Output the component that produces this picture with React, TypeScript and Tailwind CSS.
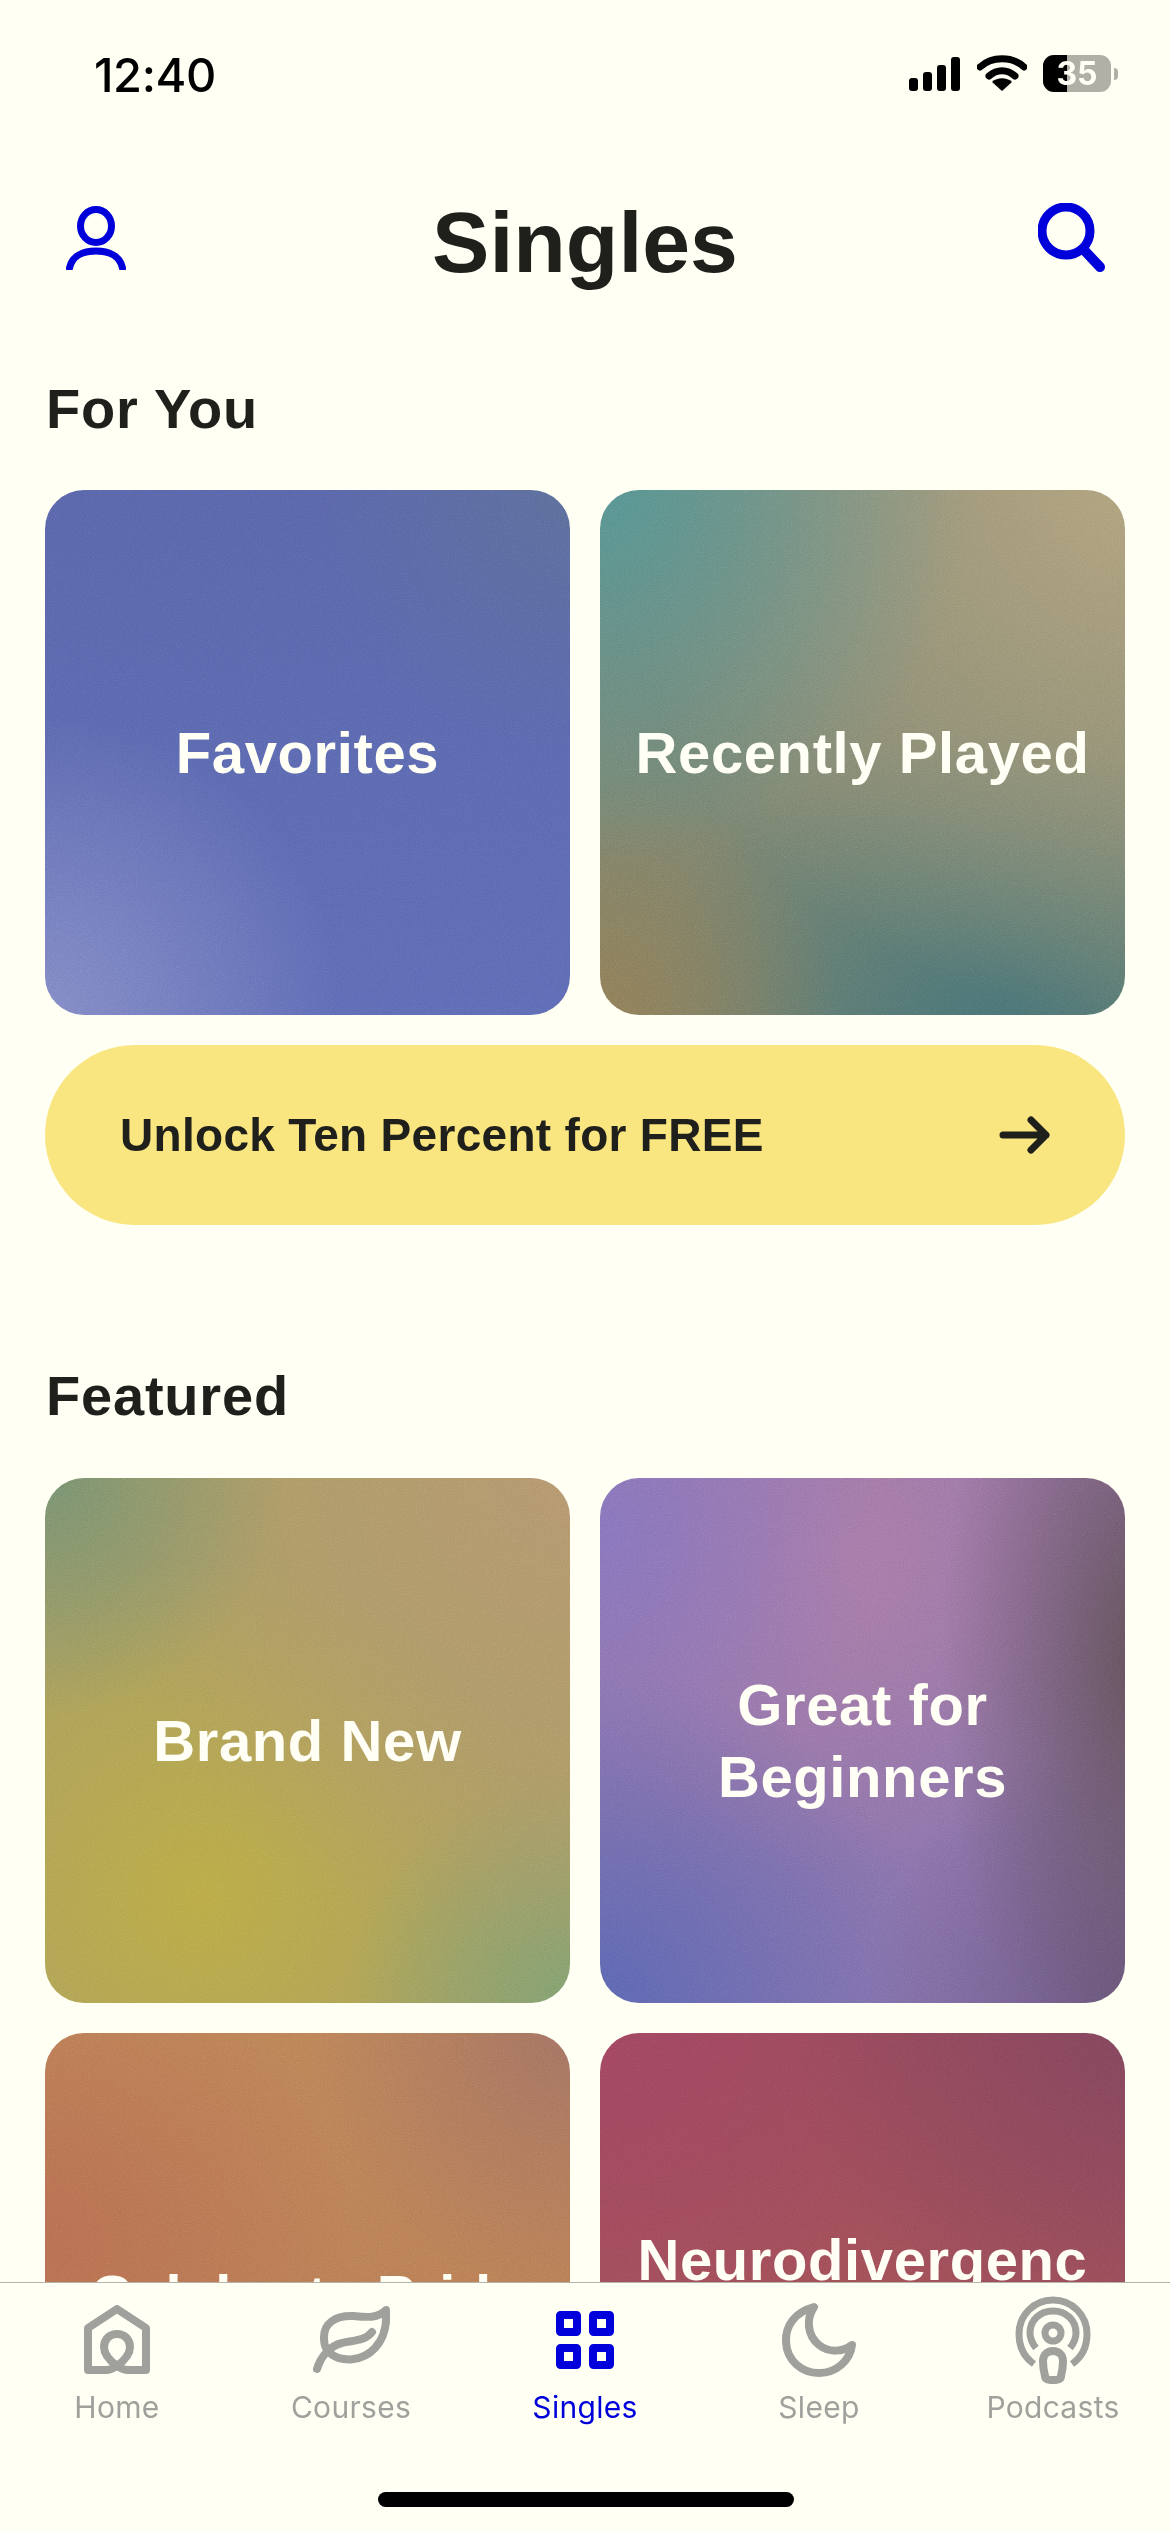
import type { ReactNode } from 'react';

const headingFont = "font-['Liberation_Sans',Arial,sans-serif]";

function Grain() {
  return (
    <svg className="absolute inset-0 h-full w-full opacity-[0.28] mix-blend-overlay" aria-hidden="true">
      <filter id="card-grain">
        <feTurbulence type="fractalNoise" baseFrequency="0.85" numOctaves="2" stitchTiles="stitch" />
        <feColorMatrix type="saturate" values="0" />
      </filter>
      <rect width="100%" height="100%" filter="url(#card-grain)" />
    </svg>
  );
}

function Card({ title, bg }: { title: string; bg: string }) {
  return (
    <div className={`relative flex h-[525px] items-center justify-center overflow-hidden rounded-[39px] px-[24px] ${bg}`}>
      <Grain />
      <span className={`relative w-full text-center text-[58px] font-bold leading-[72px] tracking-[0.6px] text-[#fffff5] [overflow-wrap:anywhere] ${headingFont}`}>
        {title}
      </span>
    </div>
  );
}

function SectionTitle({ children }: { children: ReactNode }) {
  return <h2 className={`pl-[46px] text-[56px] font-bold leading-[68px] tracking-[0.8px] text-[#1f1f1c] ${headingFont}`}>{children}</h2>;
}

function StatusBar() {
  return (
    <div className="relative flex h-[188px] shrink-0 items-start justify-between pl-[94px] pr-[52px] pt-[48px] text-black">
      <span className="text-[47px] font-medium leading-[54px] tracking-[-0.4px]">12:40</span>
      <div className="flex items-start pt-[7px]">
        <svg width="52" height="34" viewBox="0 0 52 34" className="mt-[2px]">
          <rect x="0" y="21" width="9" height="13" rx="3" />
          <rect x="14" y="15" width="9" height="19" rx="3" />
          <rect x="28" y="8" width="9" height="26" rx="3" />
          <rect x="42" y="0" width="9" height="34" rx="3" />
        </svg>
        <svg width="50" height="36" viewBox="0 0 50 36" className="ml-[16px]">
          <path d="M3 12C15 1 35 1 47 12" fill="none" stroke="#000" strokeWidth="7" strokeLinecap="round" />
          <path d="M12 21C20 14 30 14 38 21" fill="none" stroke="#000" strokeWidth="7" strokeLinecap="round" />
          <path d="M25 36L15 27C20 22 30 22 35 27Z" fill="#000" />
        </svg>
        <div className="relative ml-[16px] h-[37px] w-[68px] overflow-hidden rounded-[11px] bg-[#b0b0a6]">
          <div className="h-full w-[24px] bg-black" />
          <span className="absolute inset-0 flex items-center justify-center text-[32px] font-bold leading-none text-[#fffff5]">35</span>
        </div>
        <div className="ml-[3px] mt-[13px] h-[12px] w-[4px] rounded-r-full bg-[#b0b0a6]" />
      </div>
    </div>
  );
}

function Header() {
  return (
    <div className="relative flex h-[108px] shrink-0 items-center justify-center">
      <svg width="60" height="64" viewBox="0 0 60 64" fill="none" stroke="#0000db" strokeWidth="7" className="absolute left-[66px] top-[18px]">
        <ellipse cx="30" cy="20" rx="15.5" ry="16.5" />
        <path d="M3.5 62C6 50 17 45 30 45C43 45 54 50 56.5 62" strokeLinecap="round" />
      </svg>
      <h1 className={`text-[86px] font-bold leading-[108px] text-[#1f1f1c] ${headingFont}`}>Singles</h1>
      <svg width="68" height="70" viewBox="0 0 68 70" fill="none" stroke="#0000db" strokeWidth="9" className="absolute left-[1038px] top-[15px]">
        <circle cx="28" cy="28" r="24" />
        <path d="M46 47L62 64" strokeWidth="10" strokeLinecap="round" />
      </svg>
    </div>
  );
}

function HomeIcon() {
  return (
    <svg width="66" height="70" viewBox="0 0 66 70" fill="none" stroke="#a0a19c" strokeWidth="8" strokeLinejoin="round" strokeLinecap="round">
      <path d="M33 4L62 23V65H44C39 65 36 63 33 61C30 63 27 65 22 65H4V23Z" />
      <path d="M33 61C25 55 20 49 20 42C20 34 26 29 33 29C40 29 46 34 46 42C46 49 41 55 33 61Z" />
    </svg>
  );
}

function LeafIcon() {
  return (
    <svg width="78" height="68" viewBox="0 0 78 68" fill="none" stroke="#a0a19c" strokeWidth="8" strokeLinejoin="round" strokeLinecap="round">
      <path d="M74 4C66 13 52 11 42 10C24 9 11 17 12 33C12 38 14 44 19 48C30 56 50 56 63 42C74 30 75 16 74 4Z" />
      <path d="M5 63C9 50 18 40 30 37C40 34 52 36 60 26" />
    </svg>
  );
}

function GridIcon() {
  return (
    <svg width="58" height="58" viewBox="0 0 58 58" fill="none" stroke="#0000db" strokeWidth="8">
      <rect x="4" y="4" width="17" height="17" rx="0.5" />
      <rect x="37" y="4" width="17" height="17" rx="0.5" />
      <rect x="4" y="37" width="17" height="17" rx="0.5" />
      <rect x="37" y="37" width="17" height="17" rx="0.5" />
    </svg>
  );
}

function MoonIcon() {
  return (
    <svg width="76" height="76" viewBox="0 0 76 76" fill="none" stroke="#a0a19c" strokeWidth="8" strokeLinejoin="round">
      <path d="M33 5C14 10 4 24 5 40C6 59 21 71 38 71C56 71 69 58 71 43C62 50 48 51 38 43C26 33 25 17 33 5Z" />
    </svg>
  );
}

function PodcastIcon() {
  return (
    <svg width="76" height="88" viewBox="0 0 76 88" fill="none" stroke="#a0a19c" strokeWidth="7">
      <path d="M19 68C9 61 4 50 4 38C4 19 19 4 38 4C57 4 72 19 72 38C72 50 67 61 57 68" />
      <path d="M21 52C17 47 15 43 15 37C15 24 25 15 38 15C51 15 61 24 61 37C61 43 59 47 55 52" />
      <circle cx="38" cy="37" r="8" strokeWidth="7" />
      <path d="M38 55C44 55 48 59 48 65C48 71 47 76 46 80C46 83 43 84 38 84C33 84 30 83 30 80C29 76 28 71 28 65C28 59 32 55 38 55Z" strokeWidth="8" />
    </svg>
  );
}

const tabs = [
  { label: 'Home', icon: <HomeIcon /> },
  { label: 'Courses', icon: <LeafIcon /> },
  { label: 'Singles', icon: <GridIcon />, active: true },
  { label: 'Sleep', icon: <MoonIcon /> },
  { label: 'Podcasts', icon: <PodcastIcon /> },
];

function TabBar() {
  return (
    <div className="relative h-[250px] shrink-0 border-t border-[#b4b4aa] bg-[#fffff4]">
      <div className="grid grid-cols-5">
        {tabs.map((tab) => (
          <div key={tab.label} className="flex flex-col items-center">
            <div className="flex h-[106px] items-center justify-center pt-[8px]">{tab.icon}</div>
            <span className={`text-[30px] leading-[36px] tracking-[0.3px] ${tab.active ? 'text-[#0000db]' : 'text-[#a0a19c]'}`}>{tab.label}</span>
          </div>
        ))}
      </div>
      <div className="absolute bottom-[25px] left-[378px] h-[15px] w-[416px] rounded-full bg-black" />
    </div>
  );
}

export default function App() {
  return (
    <div className="flex h-[2532px] w-[1170px] flex-col overflow-hidden bg-[#fffff4] font-['Inter',sans-serif]">
      <StatusBar />
      <Header />
      <div className="min-h-0 flex-1 overflow-hidden">
        <div className="pt-[79px]">
          <SectionTitle>For You</SectionTitle>
        </div>
        <div className="mt-[47px] grid grid-cols-2 gap-[30px] px-[45px]">
          <Card title="Favorites" bg="bg-[radial-gradient(circle_at_0%_100%,#8087c4_0%,transparent_40%),radial-gradient(circle_at_100%_0%,#5a6b98_0%,transparent_35%),linear-gradient(#5763a8,#5c69b3)]" />
          <Card title="Recently Played" bg="bg-[radial-gradient(ellipse_at_0%_0%,#549290_0%,transparent_50%),radial-gradient(ellipse_at_100%_0%,#ae9f7a_0%,transparent_70%),radial-gradient(ellipse_at_0%_100%,#8e7b55_0%,transparent_32%),radial-gradient(ellipse_70%_60%_at_75%_105%,#457074_0%,transparent_100%),linear-gradient(#7d8270,#75806c)]" />
        </div>
        <div className="mx-[45px] mt-[30px] flex h-[180px] items-center justify-between rounded-full bg-[#fae680] pl-[75px] pr-[74px]">
          <span className={`text-[46px] font-bold tracking-[0.3px] text-[#1f1f1c] ${headingFont}`}>Unlock Ten Percent for FREE</span>
          <svg width="52" height="38" viewBox="0 0 52 38" fill="none" stroke="#1f1f1c" strokeWidth="7" strokeLinecap="round" strokeLinejoin="round">
            <path d="M4 19H47M32 4L47 19L32 34" />
          </svg>
        </div>
        <div className="mt-[137px]">
          <SectionTitle>Featured</SectionTitle>
        </div>
        <div className="mt-[48px] grid grid-cols-2 gap-[30px] px-[45px]">
          <Card title="Brand New" bg="bg-[radial-gradient(circle_at_0%_0%,#748f6f_0%,transparent_32%),radial-gradient(circle_at_100%_0%,#b3946d_0%,transparent_65%),radial-gradient(circle_at_100%_100%,#7f9e6e_0%,transparent_30%),radial-gradient(circle_at_30%_80%,#b9a945_0%,transparent_60%),linear-gradient(#a69a5e,#a69a5e)]" />
          <Card title="Great for Beginners" bg="bg-[radial-gradient(ellipse_40%_85%_at_105%_35%,#5f4e54_0%,transparent_100%),radial-gradient(circle_at_100%_100%,#6a5680_0%,transparent_35%),radial-gradient(circle_at_0%_100%,#5a64b0_0%,transparent_45%),radial-gradient(circle_at_0%_10%,#8472bb_0%,transparent_40%),radial-gradient(circle_at_45%_15%,#a878a4_0%,transparent_60%),linear-gradient(#9072a6,#8470aa)]" />
          <Card title="Celebrate Pride" bg="bg-[radial-gradient(circle_at_100%_0%,#a27060_0%,transparent_35%),radial-gradient(circle_at_0%_40%,#b66c4f_0%,transparent_50%),linear-gradient(#bb8055,#b67752)]" />
          <Card title="Neurodivergence" bg="bg-[radial-gradient(circle_at_100%_0%,#80445a_0%,transparent_45%),radial-gradient(circle_at_0%_0%,#9f455f_0%,transparent_45%),linear-gradient(#984859,#a85351)]" />
        </div>
      </div>
      <TabBar />
    </div>
  );
}
